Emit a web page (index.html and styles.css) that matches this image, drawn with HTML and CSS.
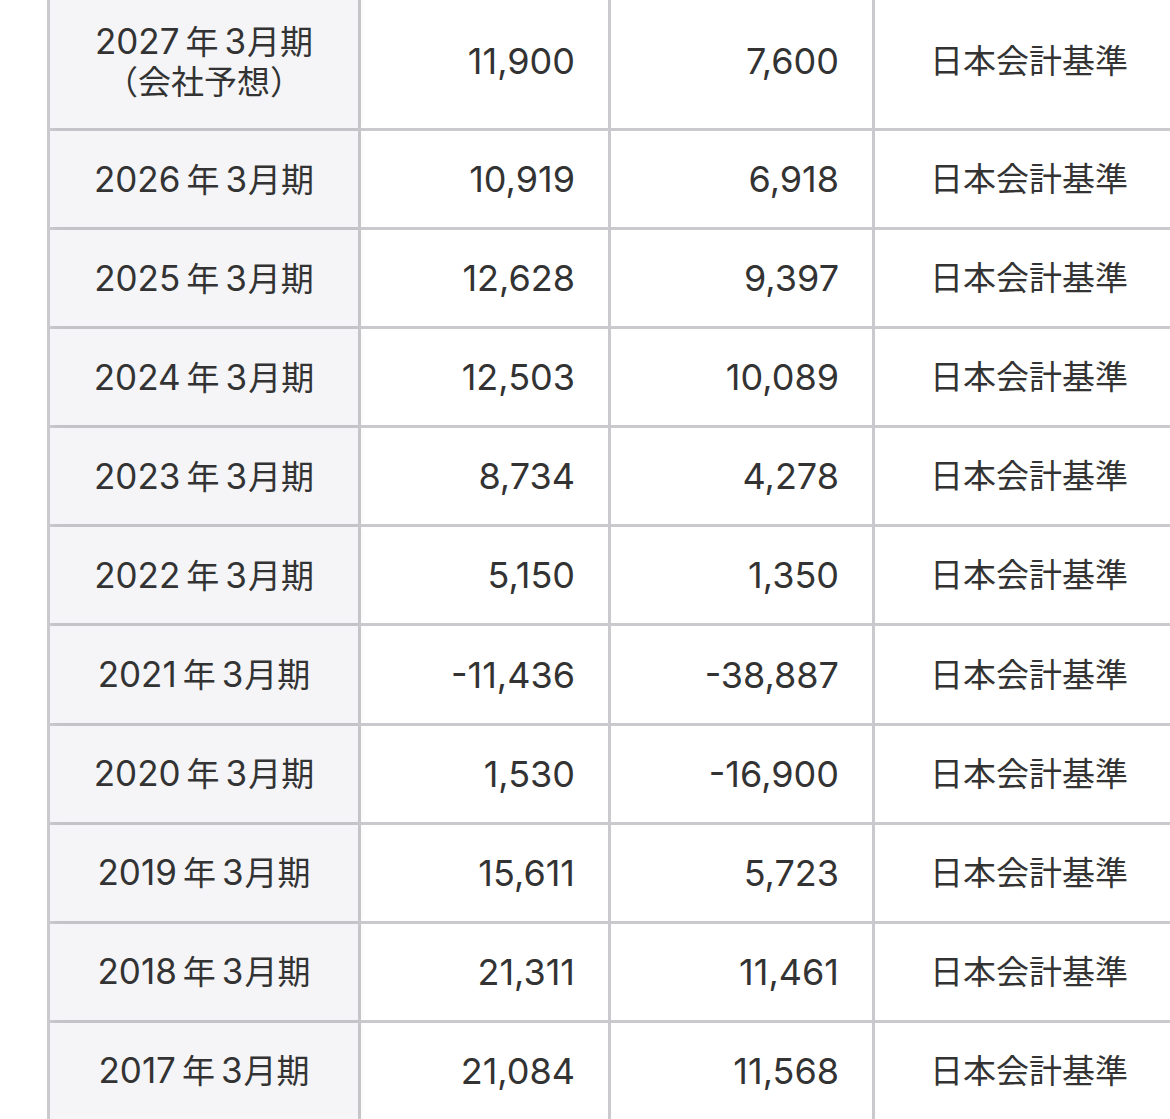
FILE: index.html
```html
<!DOCTYPE html>
<html lang="ja">
<head>
<meta charset="utf-8">
<link rel="stylesheet" href="styles.css">
</head>
<body>
<div class="wrap">
  <div class="grid">
    <div class="c h"><span><span class="y">2027</span>年<span class="m">3</span>月期<br>（会社予想）</span></div>
    <div class="c n">11,900</div><div class="c n">7,600</div><div class="c s">日本会計基準</div>

    <div class="c h"><span><span class="y">2026</span>年<span class="m">3</span>月期</span></div>
    <div class="c n">10,919</div><div class="c n">6,918</div><div class="c s">日本会計基準</div>

    <div class="c h"><span><span class="y">2025</span>年<span class="m">3</span>月期</span></div>
    <div class="c n">12,628</div><div class="c n">9,397</div><div class="c s">日本会計基準</div>

    <div class="c h"><span><span class="y">2024</span>年<span class="m">3</span>月期</span></div>
    <div class="c n">12,503</div><div class="c n">10,089</div><div class="c s">日本会計基準</div>

    <div class="c h"><span><span class="y">2023</span>年<span class="m">3</span>月期</span></div>
    <div class="c n">8,734</div><div class="c n">4,278</div><div class="c s">日本会計基準</div>

    <div class="c h"><span><span class="y">2022</span>年<span class="m">3</span>月期</span></div>
    <div class="c n">5,150</div><div class="c n">1,350</div><div class="c s">日本会計基準</div>

    <div class="c h"><span><span class="y">2021</span>年<span class="m">3</span>月期</span></div>
    <div class="c n">-11,436</div><div class="c n">-38,887</div><div class="c s">日本会計基準</div>

    <div class="c h"><span><span class="y">2020</span>年<span class="m">3</span>月期</span></div>
    <div class="c n">1,530</div><div class="c n">-16,900</div><div class="c s">日本会計基準</div>

    <div class="c h"><span><span class="y">2019</span>年<span class="m">3</span>月期</span></div>
    <div class="c n">15,611</div><div class="c n">5,723</div><div class="c s">日本会計基準</div>

    <div class="c h"><span><span class="y">2018</span>年<span class="m">3</span>月期</span></div>
    <div class="c n">21,311</div><div class="c n">11,461</div><div class="c s">日本会計基準</div>

    <div class="c h"><span><span class="y">2017</span>年<span class="m">3</span>月期</span></div>
    <div class="c n">21,084</div><div class="c n">11,568</div><div class="c s">日本会計基準</div>
  </div>
</div>
</body>
</html>
```
FILE: styles.css
```css
html, body {
  margin: 0;
  padding: 0;
  background: #ffffff;
  overflow: hidden;
}
body {
  font-family: Inter, "Noto Sans CJK JP", sans-serif;
  color: #333333;
  font-size: 33px;
}
.wrap {
  padding-left: 47px;
  margin-top: -6px;
}
.grid {
  display: grid;
  grid-template-columns: 308px 247px 261px 1fr;
  grid-template-rows: 134px;
  grid-auto-rows: 96.1px;
  gap: 3px;
  background: #c9c9ce;
  padding-left: 3px;
}
.c {
  background: #ffffff;
  display: flex;
  align-items: center;
  line-height: 40px;
  white-space: nowrap;
}
.h {
  background: #f5f5f7;
  justify-content: center;
  text-align: center;
  box-shadow: 3px 0 6px rgba(0, 0, 0, 0.04);
  position: relative;
  z-index: 1;
}
.y, .m {
  font-size: 35px;
}
.y { margin-right: 6px; }
.m { margin-left: 6px; margin-right: 1px; }
.n {
  justify-content: flex-end;
  padding-right: 33px;
  font-size: 36px;
}
.s {
  padding-left: 55px;
}
```
